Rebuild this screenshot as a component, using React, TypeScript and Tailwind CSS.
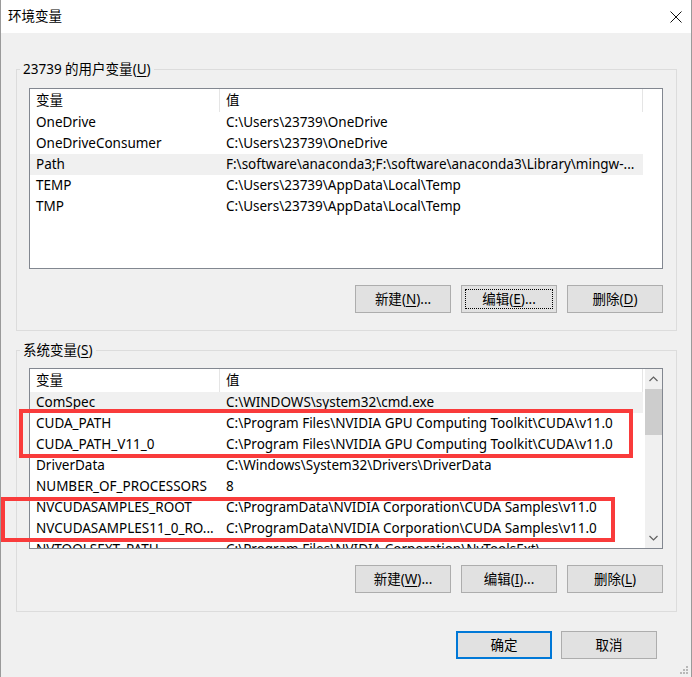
import React from 'react';

type Row = { name: string; value: string };

const userRows: Row[] = [
	{ name: 'OneDrive', value: 'C:\\Users\\23739\\OneDrive' },
	{ name: 'OneDriveConsumer', value: 'C:\\Users\\23739\\OneDrive' },
	{ name: 'Path', value: 'F:\\software\\anaconda3;F:\\software\\anaconda3\\Library\\mingw-...' },
	{ name: 'TEMP', value: 'C:\\Users\\23739\\AppData\\Local\\Temp' },
	{ name: 'TMP', value: 'C:\\Users\\23739\\AppData\\Local\\Temp' },
];

const systemRows: Row[] = [
	{ name: 'ComSpec', value: 'C:\\WINDOWS\\system32\\cmd.exe' },
	{ name: 'CUDA_PATH', value: 'C:\\Program Files\\NVIDIA GPU Computing Toolkit\\CUDA\\v11.0' },
	{ name: 'CUDA_PATH_V11_0', value: 'C:\\Program Files\\NVIDIA GPU Computing Toolkit\\CUDA\\v11.0' },
	{ name: 'DriverData', value: 'C:\\Windows\\System32\\Drivers\\DriverData' },
	{ name: 'NUMBER_OF_PROCESSORS', value: '8' },
	{ name: 'NVCUDASAMPLES_ROOT', value: 'C:\\ProgramData\\NVIDIA Corporation\\CUDA Samples\\v11.0' },
	{ name: 'NVCUDASAMPLES11_0_RO...', value: 'C:\\ProgramData\\NVIDIA Corporation\\CUDA Samples\\v11.0' },
	{ name: 'NVTOOLSEXT_PATH', value: 'C:\\Program Files\\NVIDIA Corporation\\NvToolsExt\\' },
];

/* ── list view ─────────────────────────────── */

function ListBox({ rows, selected, scroll }: { rows: Row[]; selected: number; scroll?: boolean }) {
	return (
		<div className="flex h-[181px] w-[634px] overflow-hidden border border-[#828790] bg-white">
			<div className="w-[613px] shrink-0">
				<div className="flex h-[23px] items-center">
					<div className="flex h-full w-[190px] items-center border-r border-[#e5e5e5] pl-[6px]">变量</div>
					<div className="flex h-full w-[423px] items-center border-r border-[#e5e5e5] pl-[6px]">值</div>
				</div>
				{rows.map((r, i) => (
					<div
						key={r.name}
						className={`flex h-[21px] items-center whitespace-nowrap ${i === selected ? 'bg-[#f0f0f0]' : ''}`}
					>
						<div className="w-[190px] overflow-hidden pl-[6px]">{r.name}</div>
						<div className="w-[423px] overflow-hidden pl-[6px]">{r.value}</div>
					</div>
				))}
			</div>
			{scroll && (
				<div className="ml-auto flex w-[17px] shrink-0 flex-col items-center bg-[#f0f0f0]">
					<div className="flex h-[20px] w-full items-center justify-center">
						<svg width="9" height="6" viewBox="0 0 9 6">
							<path d="M0.5 5 L4.5 1 L8.5 5" fill="none" stroke="#606060" strokeWidth="1.2" />
						</svg>
					</div>
					<div className="h-[46px] w-full bg-[#cdcdcd]" />
					<div className="flex-1" />
					<div className="flex h-[20px] w-full items-center justify-center">
						<svg width="9" height="6" viewBox="0 0 9 6">
							<path d="M0.5 1 L4.5 5 L8.5 1" fill="none" stroke="#606060" strokeWidth="1.2" />
						</svg>
					</div>
				</div>
			)}
		</div>
	);
}

/* ── buttons ───────────────────────────────── */

function Btn({
	label,
	mnemonic,
	tail,
	focus,
	isDefault,
}: {
	label: string;
	mnemonic?: string;
	tail?: string;
	focus?: boolean;
	isDefault?: boolean;
}) {
	return (
		<button
			type="button"
			className={`relative flex h-[28px] w-[96px] items-center justify-center border bg-[#e1e1e1] ${
				isDefault ? 'border-[#0078d7] shadow-[inset_0_0_0_1px_#0078d7]' : 'border-[#adadad]'
			}`}
		>
			{focus && <span className="absolute inset-[3px] border border-dotted border-black" />}
			<span>
				{label}
				{mnemonic && (
					<>
						(<u className="underline-offset-2">{mnemonic}</u>)
					</>
				)}
				{tail}
			</span>
		</button>
	);
}

function GroupBox({
	title,
	mnemonic,
	children,
	className,
}: {
	title: string;
	mnemonic: string;
	children: React.ReactNode;
	className: string;
}) {
	return (
		<fieldset className={`mx-[15px] border border-[#dcdcdc] ${className}`}>
			<legend className="ml-[3px] px-[3px] leading-[18px]">
				{title}(<u className="underline-offset-2">{mnemonic}</u>)
			</legend>
			<div className="pl-[12px] pr-[13px]">{children}</div>
		</fieldset>
	);
}

export default function App() {
	return (
		<div
			className="relative h-[677px] w-[692px] overflow-hidden border-x border-[#9a9a9a] bg-[#f0f0f0] text-[13.5px] text-black"
			style={{ fontFamily: "'Noto Sans', 'Noto Sans CJK SC', sans-serif" }}
		>
			{/* title bar */}
			<div className="flex h-[33px] items-center justify-between bg-white pl-[7px] pr-[8px]">
				<span>环境变量</span>
				<svg width="12" height="12" viewBox="0 0 12 12" className="mr-[1px]">
					<path d="M0.5 0.5 L11.5 11.5 M11.5 0.5 L0.5 11.5" stroke="#111" strokeWidth="1" />
				</svg>
			</div>

			<GroupBox title="23739 的用户变量" mnemonic="U" className="mt-[27px] pb-[17px]">
				<div className="mt-[10px]">
					<ListBox rows={userRows} selected={2} />
				</div>
				<div className="mt-[16px] flex justify-end gap-[10px]">
					<Btn label="新建" mnemonic="N" tail="..." />
					<Btn label="编辑" mnemonic="E" tail="..." focus />
					<Btn label="删除" mnemonic="D" />
				</div>
			</GroupBox>

			<GroupBox title="系统变量" mnemonic="S" className="mt-[10px] pb-[18px]">
				<div className="mt-[9px]">
					<ListBox rows={systemRows} selected={0} scroll />
				</div>
				<div className="mt-[16px] flex justify-end gap-[10px]">
					<Btn label="新建" mnemonic="W" tail="..." />
					<Btn label="编辑" mnemonic="I" tail="..." />
					<Btn label="删除" mnemonic="L" />
				</div>
			</GroupBox>

			<div className="mr-[34px] mt-[19px] flex justify-end gap-[9px]">
				<Btn label="确定" isDefault />
				<Btn label="取消" />
			</div>

			{/* resize grip */}
			<svg width="10" height="10" viewBox="0 0 10 10" className="absolute bottom-[2px] right-[2px]">
				<rect x="7" y="1" width="2" height="2" fill="#b8b8b8" />
				<rect x="4" y="4" width="2" height="2" fill="#b8b8b8" />
				<rect x="7" y="4" width="2" height="2" fill="#b8b8b8" />
				<rect x="1" y="7" width="2" height="2" fill="#b8b8b8" />
				<rect x="4" y="7" width="2" height="2" fill="#b8b8b8" />
				<rect x="7" y="7" width="2" height="2" fill="#b8b8b8" />
			</svg>

			{/* red annotation boxes */}
			<div className="absolute left-[18px] top-[409px] h-[49px] w-[614px] border-4 border-[#f93b3b]" />
			<div className="absolute left-0 top-[497px] h-[45px] w-[614px] border-4 border-[#f93b3b]" />
		</div>
	);
}
